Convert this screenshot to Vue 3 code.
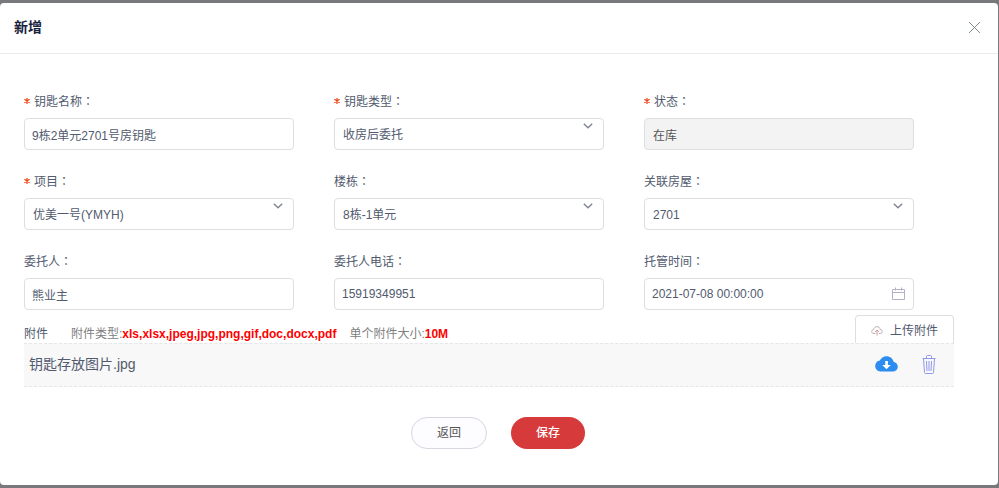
<script setup>
import { reactive } from 'vue'

const fields = reactive([
  { id: 'name', label: '钥匙名称', required: true, type: 'text', value: '9栋2单元2701号房钥匙' },
  { id: 'kind', label: '钥匙类型', required: true, type: 'select', value: '收房后委托' },
  { id: 'status', label: '状态', required: true, type: 'disabled', value: '在库' },
  { id: 'project', label: '项目', required: true, type: 'select', value: '优美一号(YMYH)' },
  { id: 'building', label: '楼栋', type: 'select', value: '8栋-1单元' },
  { id: 'room', label: '关联房屋', type: 'select', value: '2701' },
  { id: 'client', label: '委托人', type: 'text', value: '熊业主' },
  { id: 'phone', label: '委托人电话', type: 'text', value: '15919349951' },
  { id: 'time', label: '托管时间', type: 'date', value: '2021-07-08 00:00:00' },
])
</script>

<template>
  <div class="backdrop">
    <form class="modal" @submit.prevent>
      <header class="head">
        <h1 class="title">新增</h1>
        <button class="close" type="button" aria-label="关闭">
          <svg width="13" height="13" viewBox="0 0 13 13" fill="none" stroke="#808a8f" stroke-width="1">
            <path d="M1 1 12 12M12 1 1 12" />
          </svg>
        </button>
      </header>

      <div class="body">
        <div class="grid">
          <div v-for="f in fields" :key="f.id" class="field">
            <label class="label" :for="f.id">
              <svg v-if="f.required" class="star" width="6" height="6" viewBox="0 0 6 6" fill="none" stroke="#ed4014" stroke-width="1.2">
                <path d="M3 0V6M.4 1.3 5.6 4.7M5.6 1.3.4 4.7" />
              </svg>
              <span>{{ f.label }}<span class="colon">：</span></span>
            </label>
            <div class="control">
              <select v-if="f.type === 'select'" :id="f.id" v-model="f.value" class="box select">
                <option>{{ f.value }}</option>
              </select>
              <input v-else :id="f.id" v-model="f.value" class="box" type="text" :disabled="f.type === 'disabled'">
              <svg v-if="f.type === 'select'" class="chevron" width="10" height="6" viewBox="0 0 10 6" fill="none" stroke="#80868f" stroke-width="1.4">
                <path d="M.8.7 5 4.8 9.2.7" />
              </svg>
              <svg v-if="f.type === 'date'" class="calendar" width="13" height="13" viewBox="0 0 13 13" fill="none" stroke="#b4b0c8" stroke-width="1">
                <path d="M.5 2.5H12.5V12.5H.5ZM.5 5.5H12.5M3.5 .5V3.5M9.5 .5V3.5" />
              </svg>
            </div>
          </div>
        </div>

        <div class="attach">
          <p class="note">
            <span>附件</span>
            <span class="hint types">附件类型:<b>xls,xlsx,jpeg,jpg,png,gif,doc,docx,pdf</b></span>
            <span class="hint">单个附件大小:<b>10M</b></span>
          </p>
          <button class="upload" type="button">
            <svg width="12" height="10" viewBox="0 0 12 10" fill="none" stroke="#b4b0b8" stroke-width="1">
              <path d="M4.3 7.5H2.8C-.1 7.5.1 3.8 2.7 3.5 3.1-.2 8.7-.4 9.2 3.5 12.2 3.8 12 7.5 9.2 7.5H7.7" />
              <path d="M6 9.5V4.3M4.1 5.9 6 4 7.9 5.9" stroke="#d59b9b" />
            </svg>
            <span>上传附件</span>
          </button>
        </div>
        <div class="file">
          <span class="filename">钥匙存放图片.jpg</span>
          <button class="icon" type="button" aria-label="下载">
            <svg width="23" height="16" viewBox="0 0 23 16">
              <path fill="#2d8cf0" d="M18.7 6.1C18 2.6 15.1.3 11.5.3 8.6.3 6.1 2 4.9 4.6 2.1 5 .2 7.2.2 10c0 3 2.3 5.4 5.2 5.4h12.9c2.6 0 4.5-2.1 4.5-4.6 0-2.5-1.8-4.5-4.1-4.7Z" />
              <path fill="#fff" d="M10.2 5h2.7v4h2.9l-4.3 4.2L7.2 9h3Z" />
            </svg>
          </button>
          <button class="icon" type="button" aria-label="删除">
            <svg width="14" height="19" viewBox="0 0 14 19" fill="none" stroke="#9299eb" stroke-width="1">
              <path d="M.5 3.5H13.5M4.5 3.5V1.5Q4.5.5 5.5.5H8.5Q9.5.5 9.5 1.5V3.5M1.5 3.5 2.5 17.5Q2.6 18.5 3.6 18.5H10.4Q11.4 18.5 11.5 17.5L12.5 3.5M4.5 6 5 16M7 6V16M9.5 6 9 16" />
            </svg>
          </button>
        </div>
      </div>

      <footer class="foot">
        <button class="btn back" type="button">返回</button>
        <button class="btn save" type="submit">保存</button>
      </footer>
    </form>
  </div>
</template>

<style>
body {
  background: #77797c;
}
</style>

<style scoped>
.backdrop {
  box-sizing: border-box;
  min-height: 100vh;
  padding: 3px 1px 3px 0;
  display: flex;
  background: #77797c;
  font-family: "Liberation Sans", "Noto Sans CJK SC", sans-serif;
  font-size: 12px;
  line-height: 20px;
  color: #515a6e;
}
.modal {
  flex: 1;
  min-width: 0;
  background: #fff;
  border-radius: 4px;
}
button {
  margin: 0;
  font: inherit;
  cursor: pointer;
}
.head {
  display: flex;
  align-items: center;
  justify-content: space-between;
  padding: 14px 17px 15px 14px;
  border-bottom: 1px solid #e8eaec;
}
.title {
  margin: 0;
  font-size: 14px;
  line-height: 21px;
  font-weight: bold;
  color: #17233d;
}
.close,
.icon {
  display: flex;
  padding: 0;
  border: 0;
  background: none;
}
.body {
  padding: 36px 44px 0 24px;
}
.grid {
  display: grid;
  grid-template-columns: repeat(3, 1fr);
  row-gap: 20px;
}
.field {
  padding-right: 40px;
}
.label {
  display: flex;
  align-items: center;
  gap: 4px;
  margin-bottom: 4px;
  line-height: 24px;
}
.star {
  margin-bottom: 2px;
}
.colon {
  font-family: "Noto Sans CJK TC", sans-serif;
  line-height: 1;
}
.control {
  position: relative;
}
.box {
  display: block;
  box-sizing: border-box;
  width: 100%;
  height: 32px;
  margin: 0;
  padding: 0 7px;
  border: 1px solid #dcdee2;
  border-radius: 4px;
  background: #fff;
  font: inherit;
  color: #515a6e;
  outline: none;
  appearance: none;
}
.select {
  padding: 2px 8px 0;
}
.box:disabled {
  padding: 0 8px;
  background: #f3f3f3;
  color: #555;
}
.chevron {
  position: absolute;
  top: 5px;
  right: 11px;
  pointer-events: none;
}
.calendar {
  position: absolute;
  top: 9px;
  right: 9px;
}
.attach {
  display: flex;
  align-items: flex-end;
  justify-content: space-between;
  padding-top: 5px;
}
.note {
  display: flex;
  margin: 0;
  line-height: 18px;
}
.hint {
  color: #808080;
}
.types {
  margin: 0 13px 0 23px;
}
.hint b {
  color: #f00;
}
.upload {
  display: flex;
  align-items: center;
  gap: 7px;
  height: 28px;
  padding: 2px 15px 0;
  border: 1px solid #dcdee2;
  border-bottom: 0;
  border-radius: 4px 4px 0 0;
  background: #fff;
  color: #515a6e;
}
.file {
  display: flex;
  align-items: center;
  gap: 24px;
  padding: 9px 18px 11px 5px;
  border: dashed #e4e6e8;
  border-width: 1px 0;
  background: #f8f8f8;
  line-height: 22px;
}
.filename {
  flex: 1;
  font-size: 14px;
}
.foot {
  display: flex;
  justify-content: center;
  gap: 24px;
  padding: 30px 2px 36px 0;
}
.btn {
  height: 32px;
  padding: 0 25px;
  border: 0;
  border-radius: 16px;
}
.back {
  border: 1px solid #d7d7e2;
  background: #fdfcff;
  color: #555;
}
.save {
  background: #d63a3a;
  color: #fff;
  font-weight: 500;
}
</style>
